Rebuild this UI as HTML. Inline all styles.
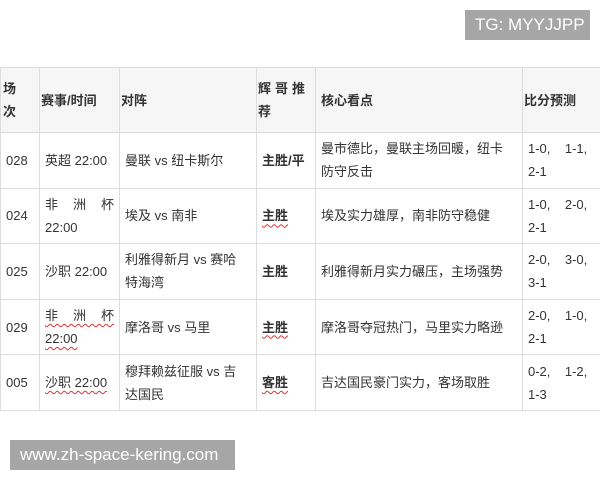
<!DOCTYPE html>
<html><head><meta charset="utf-8"><style>
*{margin:0;padding:0;box-sizing:border-box}
body{width:600px;height:480px;background:#fff;position:relative;overflow:hidden;font-family:"Liberation Sans","Noto Sans CJK SC",sans-serif;color:#333;font-size:13px}
.badge{position:absolute;background:#a6a6a6;color:#fff;font-size:17px;line-height:30px;padding-left:10px}
table{position:absolute;left:0;top:67px;border-collapse:collapse;table-layout:fixed;width:600px}
td{border:1px solid #dcdcdc;padding:0 5px;line-height:23px;vertical-align:middle;white-space:nowrap}
tr.h td{background:#f6f6f6;font-weight:bold;height:65px}
tr.r td{height:55.6px}
.w{text-decoration:underline wavy #d33;text-decoration-thickness:1px;text-underline-offset:3px}
.j{text-align:justify;text-align-last:justify}
</style></head><body>
<div class="badge" style="left:465px;top:10px;width:125px;height:30px">TG: MYYJJPP</div>
<table>
<colgroup><col style="width:39px"><col style="width:80px"><col style="width:137px"><col style="width:59px"><col style="width:207px"><col style="width:78px"></colgroup>
<tr class="h"><td style="padding-left:2px">场<br>次</td><td style="padding-left:1px">赛事/时间</td><td style="padding-left:1px">对阵</td><td style="padding-left:1px;letter-spacing:4px">辉哥推<br>荐</td><td>核心看点</td><td style="padding-left:1px">比分预测</td></tr>
<tr class="r"><td>028</td><td>英超 22:00</td><td>曼联 vs 纽卡斯尔</td><td style="font-weight:bold">主胜/平</td><td>曼市德比，曼联主场回暖，纽卡<br>防守反击</td><td>1-0,&nbsp;&nbsp;&nbsp; 1-1,<br>2-1</td></tr>
<tr class="r"><td>024</td><td><div class="j">非 洲 杯</div>22:00</td><td>埃及 vs 南非</td><td style="font-weight:bold"><span class="w">主胜</span></td><td>埃及实力雄厚，南非防守稳健</td><td>1-0,&nbsp;&nbsp;&nbsp; 2-0,<br>2-1</td></tr>
<tr class="r"><td>025</td><td>沙职 22:00</td><td>利雅得新月 vs 赛哈<br>特海湾</td><td style="font-weight:bold">主胜</td><td>利雅得新月实力碾压，主场强势</td><td>2-0,&nbsp;&nbsp;&nbsp; 3-0,<br>3-1</td></tr>
<tr class="r"><td>029</td><td><div class="j"><span class="w">非 洲 杯</span></div><span class="w">22:00</span></td><td>摩洛哥 vs 马里</td><td style="font-weight:bold"><span class="w">主胜</span></td><td>摩洛哥夺冠热门，马里实力略逊</td><td>2-0,&nbsp;&nbsp;&nbsp; 1-0,<br>2-1</td></tr>
<tr class="r"><td>005</td><td><span class="w">沙职 22:00</span></td><td>穆拜赖兹征服 vs 吉<br>达国民</td><td style="font-weight:bold"><span class="w">客胜</span></td><td>吉达国民豪门实力，客场取胜</td><td>0-2,&nbsp;&nbsp;&nbsp; 1-2,<br>1-3</td></tr>
</table>
<div class="badge" style="left:10px;top:440px;width:225px;height:30px">www.zh-space-kering.com</div>
</body></html>
